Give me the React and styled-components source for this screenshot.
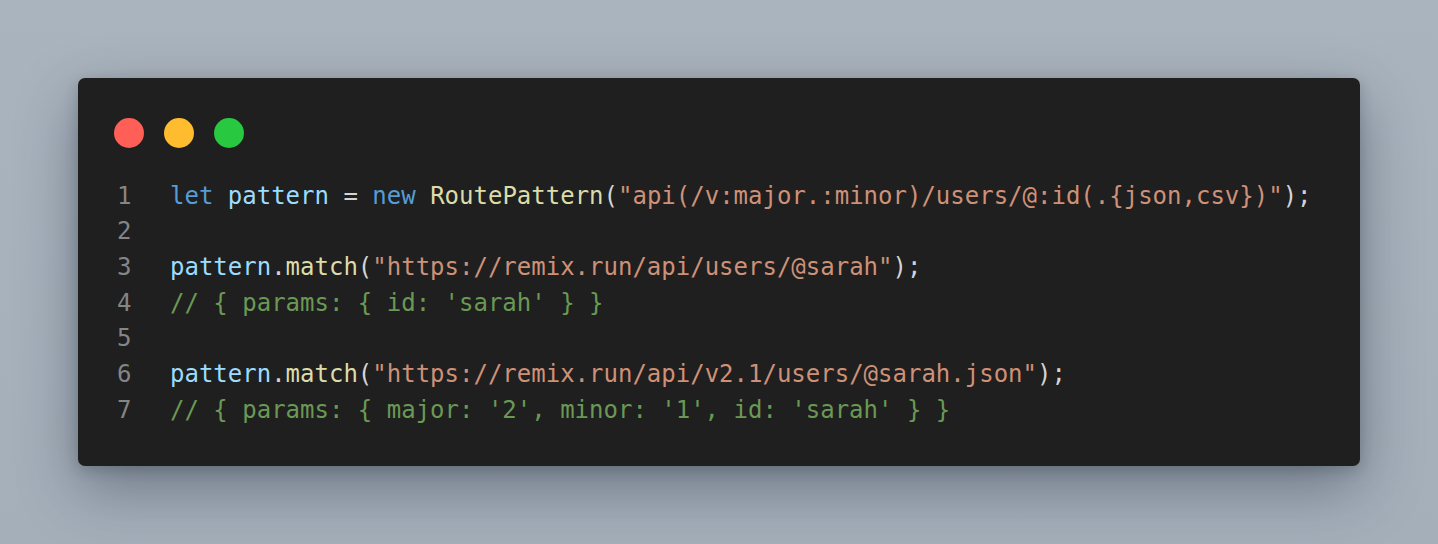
import React from "react";
import styled, { createGlobalStyle } from "styled-components";

const Global = createGlobalStyle`
  html, body { margin: 0; padding: 0; }
  body { background: #a8b2bd; }
`;

const Page = styled.div`
  width: 1438px;
  height: 544px;
  box-sizing: border-box;
  padding: 78px;
  background: linear-gradient(180deg, #aab4be 0%, #a4afba 100%);
`;

const Window = styled.div`
  height: 100%;
  box-sizing: border-box;
  background: #1f1f1f;
  border-radius: 7px;
  padding: 40px 36px 0 36px;
  box-shadow: 0 22px 60px rgba(20, 30, 45, 0.38), 0 4px 14px rgba(20, 30, 45, 0.2);
  display: flex;
  flex-direction: column;
  gap: 30.5px;
`;

const Dots = styled.div`
  display: flex;
  gap: 20px;
`;

const Dot = styled.span`
  width: 30px;
  height: 30px;
  border-radius: 50%;
  background: ${(p) => p.$c};
`;

const Code = styled.div`
  font-family: "DejaVu Sans Mono", "Liberation Mono", monospace;
  font-size: 24px;
  line-height: 35.7px;
  color: #d4d4d4;
  white-space: pre;
`;

const Line = styled.div`
  display: flex;
  height: 35.7px;
`;

const Num = styled.span`
  width: 53px;
  padding-left: 3px;
  flex: none;
  color: #858585;
`;

const T = styled.span`
  color: ${(p) =>
    ({
      kw: "#569cd6",
      v: "#9cdcfe",
      fn: "#dcdcaa",
      s: "#ce9178",
      c: "#6a9955",
      p: "#d4d4d4",
    })[p.$k]};
`;

const lines = [
  [
    ["kw", "let"],
    ["p", " "],
    ["v", "pattern"],
    ["p", " = "],
    ["kw", "new"],
    ["p", " "],
    ["fn", "RoutePattern"],
    ["p", "("],
    ["s", '"api(/v:major.:minor)/users/@:id(.{json,csv})"'],
    ["p", ");"],
  ],
  [],
  [
    ["v", "pattern"],
    ["p", "."],
    ["fn", "match"],
    ["p", "("],
    ["s", '"https://remix.run/api/users/@sarah"'],
    ["p", ");"],
  ],
  [["c", "// { params: { id: 'sarah' } }"]],
  [],
  [
    ["v", "pattern"],
    ["p", "."],
    ["fn", "match"],
    ["p", "("],
    ["s", '"https://remix.run/api/v2.1/users/@sarah.json"'],
    ["p", ");"],
  ],
  [["c", "// { params: { major: '2', minor: '1', id: 'sarah' } }"]],
];

export default function App() {
  return (
    <>
      <Global />
      <Page>
        <Window>
          <Dots>
            <Dot $c="#ff5f57" />
            <Dot $c="#febc2e" />
            <Dot $c="#28c840" />
          </Dots>
          <Code>
            {lines.map((toks, i) => (
              <Line key={i}>
                <Num>{i + 1}</Num>
                <span>
                  {toks.map(([k, t], j) => (
                    <T key={j} $k={k}>
                      {t}
                    </T>
                  ))}
                </span>
              </Line>
            ))}
          </Code>
        </Window>
      </Page>
    </>
  );
}
